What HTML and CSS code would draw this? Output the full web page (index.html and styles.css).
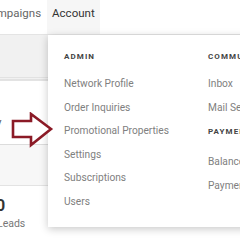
FILE: index.html
```html
<!DOCTYPE html>
<html lang="en">
<head>
  <meta charset="UTF-8" />
  <meta name="viewport" content="width=device-width, initial-scale=1.0"/>
  <title>Account menu</title>
  <link rel="stylesheet" href="styles.css">
</head>
<body>

  <header class="topnav">
    <a class="nav-link nav-first">Campaigns</a>
    <a class="nav-link is-active">Account</a>
  </header>

  <main class="content">
    <div class="band"></div>
    <section class="card card-top"><span class="card-label">Company</span></section>
    <div class="gap"></div>
    <section class="card card-stat">
      <div class="stat-num">0</div>
      <div class="stat-label">Leads</div>
    </section>
  </main>

  <!-- Account dropdown -->
  <nav class="dropdown">
    <div class="dd-col dd-col-admin">
      <h3>Admin</h3>
      <a>Network Profile</a>
      <a>Order Inquiries</a>
      <a>Promotional Properties</a>
      <a>Settings</a>
      <a>Subscriptions</a>
      <a>Users</a>
    </div>
    <div class="dd-col">
      <h3>Communications</h3>
      <a>Inbox</a>
      <a>Mail Settings</a>
      <h3 class="dd-sub">Payments</h3>
      <a>Balance</a>
      <a>Payment Methods</a>
    </div>
  </nav>

  <!-- annotation arrow -->
  <svg class="pointer" width="44" height="38" viewBox="0 0 44 38">
    <polygon points="2,9 20,9 20,2 40,17 20,33 20,25 2,25" fill="#fff" stroke="#8b1a26" stroke-width="2.6" stroke-linejoin="miter"/>
  </svg>

</body>
</html>
```

FILE: styles.css
```css
body { font-family: Roboto, "Liberation Sans", sans-serif; background: #f4f4f4; margin: 0; width: 240px; height: 240px; overflow: hidden; position: relative; color: #333; }
a { text-decoration: none; }

.topnav { height: 34px; background: #fff; border-bottom: 1px solid #e4e4e4; display: flex; align-items: flex-start; }
.nav-link { font-size: 11.5px; line-height: 26px; height: 34px; padding: 0 5px; color: #666; }
.nav-first { margin-left: -22px; margin-right: 1px; }
.nav-link.is-active { color: #333; background: #f6f6f6; }

.content { display: flex; flex-direction: column; }
.band { height: 42px; background: #f1f1f1; border-bottom: 3px double #e2e2e2; }
.card { background: #fff; border-top: 1px solid #e3e3e3; border-bottom: 1px solid #dcdcdc; }
.card-top { height: 63px; display: flex; align-items: center; }
.card-label { font-size: 11px; color: #555; margin-left: -45px; margin-top: 20px; }
.gap { height: 40px; background: #f7f7f7; }
.card-stat { height: 60px; padding-top: 10px; }
.stat-num { font-size: 16px; font-weight: 700; color: #333; margin-left: -4px; line-height: 20px; }
.stat-label { font-size: 10.5px; color: #777; margin-left: -3px; line-height: 14px; margin-top: 1px; }

.dropdown { position: absolute; top: 35px; left: 48px; width: 260px; height: 192px; background: #fff; box-shadow: 0 2px 8px rgba(0,0,0,0.22); display: flex; padding: 16px 0 0 16px; box-sizing: border-box; }
.dd-col { display: flex; flex-direction: column; width: 144px; flex-shrink: 0; }
.dd-col h3 { font-size: 8px; font-weight: 700; letter-spacing: 1.1px; text-transform: uppercase; color: #444; line-height: 12px; margin: 0 0 9px; }
.dd-col h3.dd-sub { margin: 7px 0 12px; }
.dd-col a { font-size: 10.2px; line-height: 23.5px; color: #808080; white-space: nowrap; }

.pointer { position: absolute; left: 11px; top: 112px; }
```
